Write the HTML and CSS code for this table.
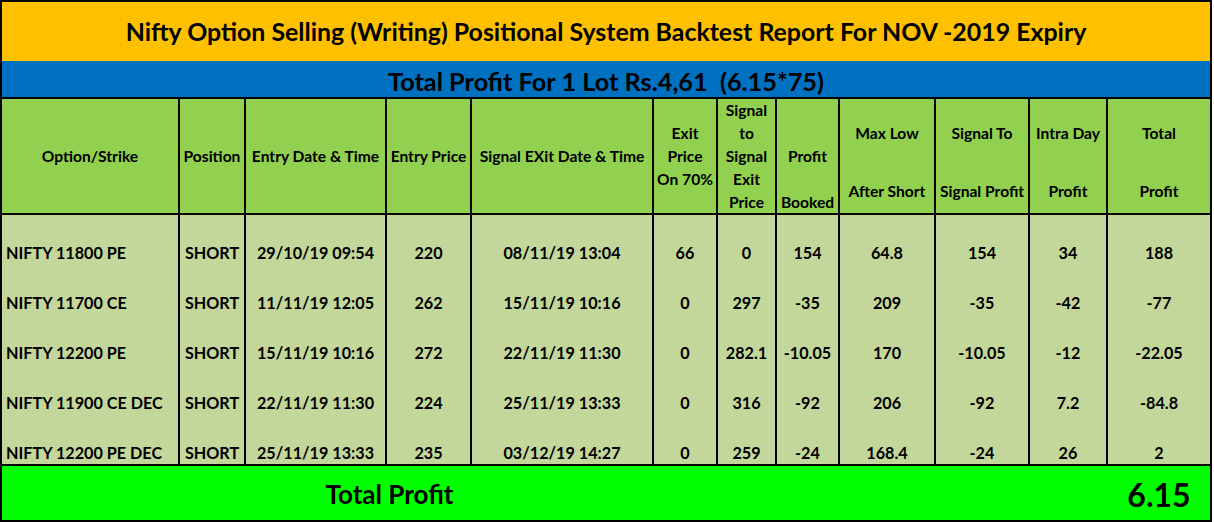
FILE: index.html
```html
<!DOCTYPE html>
<html>
<head>
<meta charset="utf-8">
<link rel="stylesheet" href="styles.css">
</head>
<body>
<div class="sheet">
  <div class="title">Nifty Option Selling (Writing) Positional System Backtest Report For NOV -2019 Expiry</div>
  <div class="sub">Total Profit For 1 Lot Rs.4,61&nbsp;&nbsp;(6.15*75)</div>

  <div class="hd mid"><span>Option/Strike</span></div>
  <div class="hd mid"><span>Position</span></div>
  <div class="hd mid"><span>Entry Date &amp; Time</span></div>
  <div class="hd mid"><span>Entry Price</span></div>
  <div class="hd mid"><span>Signal EXit Date &amp; Time</span></div>
  <div class="hd mid"><span>Exit</span><span>Price</span><span>On 70%</span></div>
  <div class="hd mid"><span>Signal</span><span>to</span><span>Signal</span><span>Exit</span><span>Price</span></div>
  <div class="hd end"><span>Profit</span><span>&nbsp;</span><span>Booked</span></div>
  <div class="hd two"><span>Max Low</span><span class="low">After Short</span></div>
  <div class="hd two"><span>Signal To</span><span class="low">Signal Profit</span></div>
  <div class="hd two"><span>Intra Day</span><span class="low">Profit</span></div>
  <div class="hd two"><span>Total</span><span class="low">Profit</span></div>

  <div class="c first left">NIFTY 11800 PE</div><div class="c first">SHORT</div><div class="c first">29/10/19 09:54</div><div class="c first">220</div><div class="c first">08/11/19 13:04</div><div class="c first">66</div><div class="c first">0</div><div class="c first">154</div><div class="c first">64.8</div><div class="c first">154</div><div class="c first">34</div><div class="c first">188</div>

  <div class="c left">NIFTY 11700 CE</div><div class="c">SHORT</div><div class="c">11/11/19 12:05</div><div class="c">262</div><div class="c">15/11/19 10:16</div><div class="c">0</div><div class="c">297</div><div class="c">-35</div><div class="c">209</div><div class="c">-35</div><div class="c">-42</div><div class="c">-77</div>

  <div class="c left">NIFTY 12200 PE</div><div class="c">SHORT</div><div class="c">15/11/19 10:16</div><div class="c">272</div><div class="c">22/11/19 11:30</div><div class="c">0</div><div class="c">282.1</div><div class="c">-10.05</div><div class="c">170</div><div class="c">-10.05</div><div class="c">-12</div><div class="c">-22.05</div>

  <div class="c left">NIFTY 11900 CE DEC</div><div class="c">SHORT</div><div class="c">22/11/19 11:30</div><div class="c">224</div><div class="c">25/11/19 13:33</div><div class="c">0</div><div class="c">316</div><div class="c">-92</div><div class="c">206</div><div class="c">-92</div><div class="c">7.2</div><div class="c">-84.8</div>

  <div class="c left">NIFTY 12200 PE DEC</div><div class="c">SHORT</div><div class="c">25/11/19 13:33</div><div class="c">235</div><div class="c">03/12/19 14:27</div><div class="c">0</div><div class="c">259</div><div class="c">-24</div><div class="c">168.4</div><div class="c">-24</div><div class="c">26</div><div class="c">2</div>

  <div class="total">
    <div class="total-label">Total Profit</div>
    <div class="total-value">6.15</div>
  </div>
</div>
</body>
</html>
```

FILE: styles.css
```css
html, body {
  margin: 0;
  padding: 0;
  background: #ffffff;
}

body {
  font-family: Lato, "Liberation Sans", sans-serif;
  font-weight: 700;
  color: #000000;
}

.sheet {
  width: 1208px;
  border: 2px solid #000000;
  display: grid;
  grid-template-columns: 176px 64px 139px 83px 180px 62px 57px 61px 94px 92px 76px 102px;
  grid-template-rows: 59px 38px 116px 49px 50px 50px 50px 50px 56px;
  column-gap: 2px;
  row-gap: 0;
  background: #000000;
}

.title {
  grid-column: 1 / -1;
  background: #FFC000;
  display: flex;
  align-items: center;
  justify-content: center;
  font-size: 24.9px;
  padding-bottom: 1px;
}

.sub {
  grid-column: 1 / -1;
  background: #0070C0;
  border-bottom: 2px solid #000000;
  display: flex;
  align-items: center;
  justify-content: center;
  font-size: 25.3px;
  height: 38px;
  box-sizing: border-box;
  padding-top: 3px;
}

.hd {
  background: #92D050;
  border-bottom: 2px solid #000000;
  display: flex;
  flex-direction: column;
  align-items: center;
  text-align: center;
  font-size: 15.6px;
  line-height: 23px;
  white-space: nowrap;
  padding-top: 1px;
}

.hd span {
  display: block;
}

.hd.mid {
  justify-content: center;
}

.hd.end {
  justify-content: flex-end;
  padding-bottom: 0;
}

.hd.end span:last-child {
  margin-bottom: -1px;
}

.hd.two {
  justify-content: flex-start;
  padding-top: 23px;
}

.hd .low {
  margin-top: 35px;
}

.c {
  background: #C4D79B;
  display: flex;
  align-items: flex-end;
  justify-content: center;
  font-size: 16.2px;
  line-height: 18px;
  padding-bottom: 2px;
  white-space: nowrap;
}

.c.left {
  justify-content: flex-start;
  padding-left: 4px;
}

.total {
  grid-column: 1 / -1;
  background: #00FF00;
  border-top: 2px solid #000000;
  display: grid;
  grid-template-columns: 775px 331px 102px;
}

.total-label {
  display: flex;
  align-items: center;
  justify-content: center;
  font-size: 26px;
  padding-top: 2px;
}

.total-value {
  grid-column: 3;
  display: flex;
  align-items: center;
  justify-content: center;
  font-size: 32px;
  padding-top: 2px;
}
```
